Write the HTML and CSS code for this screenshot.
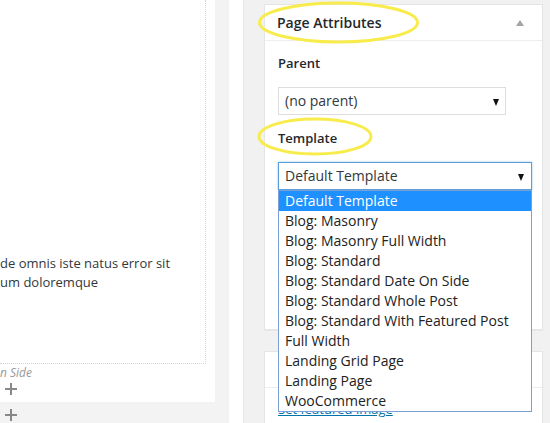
FILE: index.html
```html
<!DOCTYPE html>
<html>
<head>
<meta charset="utf-8">
<link rel="stylesheet" href="styles.css">
</head>
<body>
<div class="page">
  <div class="editor">
    <div class="editor-main">
      <div class="canvas">
        <p class="lorem">de omnis iste natus error sit<br>um doloremque</p>
      </div>
      <div class="caption">n Side</div>
      <div class="plus first"></div>
    </div>
    <div class="editor-foot">
      <div class="plus"></div>
    </div>
  </div>
  <div class="gutter-grey"></div>
  <div class="gutter-white"></div>
  <div class="sidebar">
    <div class="postbox">
      <div class="hndle">
        <h2>Page Attributes</h2>
        <span class="toggle"></span>
      </div>
      <div class="inside">
        <p class="label">Parent</p>
        <div class="select parent">(no parent)<span class="arrow"></span></div>
        <p class="label">Template</p>
        <div class="select-wrap">
          <div class="select focus">Default Template<span class="arrow"></span></div>
          <ul class="dropdown">
            <li class="selected">Default Template</li>
            <li>Blog: Masonry</li>
            <li>Blog: Masonry Full Width</li>
            <li>Blog: Standard</li>
            <li>Blog: Standard Date On Side</li>
            <li>Blog: Standard Whole Post</li>
            <li>Blog: Standard With Featured Post</li>
            <li>Full Width</li>
            <li>Landing Grid Page</li>
            <li>Landing Page</li>
            <li>WooCommerce</li>
          </ul>
        </div>
      </div>
    </div>
    <div class="postbox second">
      <div class="hndle"></div>
      <div class="inside">
        <a class="link" href="#">Set featured image</a>
      </div>
    </div>
    <svg class="marks" width="550" height="423" viewBox="0 0 550 423">
      <ellipse cx="338.5" cy="22.5" rx="79" ry="19.5" fill="none" stroke="#f8ec4c" stroke-width="3"/>
      <ellipse cx="315" cy="136.5" rx="56" ry="17.5" fill="none" stroke="#f8ec4c" stroke-width="3"/>
    </svg>
  </div>
</div>
</body>
</html>
```

FILE: styles.css
```css
* { box-sizing: border-box; }
html, body { margin: 0; padding: 0; }
body {
  width: 550px;
  height: 423px;
  overflow: hidden;
  font-family: "Open Sans", "Noto Sans", sans-serif;
  color: #32373c;
  background: #f1f1f1;
}
.page {
  display: flex;
  height: 423px;
  overflow: hidden;
}
.editor {
  width: 215px;
  display: flex;
  flex-direction: column;
}
.editor-main {
  background: #fff;
  height: 402px;
}
.canvas {
  width: 206px;
  height: 364px;
  border-right: 1px dotted #d4d4d4;
  border-bottom: 1px dotted #d4d4d4;
  padding-top: 254px;
}
.lorem {
  margin: 0;
  font-size: 13px;
  line-height: 19px;
  color: #32373c;
}
.caption {
  font-size: 12px;
  font-style: italic;
  color: #999;
  line-height: 14px;
  margin-top: 2px;
}
.plus {
  position: relative;
  width: 12px;
  height: 12px;
  margin-left: 5px;
}
.plus::before, .plus::after {
  content: "";
  position: absolute;
  background: #888;
}
.plus::before { left: 0; top: 5px; width: 12px; height: 2px; }
.plus::after { left: 5px; top: 0; width: 2px; height: 12px; }
.plus.first { margin-top: 3px; }
.editor-foot {
  flex: 1;
  background: #f3f3f3;
  padding-top: 7px;
}
.gutter-grey { width: 14px; background: #f3f3f3; }
.gutter-white { width: 14px; background: #fff; }
.sidebar {
  flex: 1;
  background: #f1f1f1;
  border-left: 1px solid #e8e8e8;
  padding: 4px 0 0 20px;
}
.postbox {
  width: 279px;
  background: #fff;
  border: 1px solid #e5e5e5;
  box-shadow: 0 1px 1px rgba(0,0,0,0.04);
}
.hndle {
  height: 36px;
  border-bottom: 1px solid #eee;
  display: flex;
  align-items: center;
  justify-content: space-between;
  padding: 0 12px;
}
.hndle h2 {
  margin: 0;
  font-size: 14px;
  font-weight: 600;
  color: #23282d;
  line-height: 1;
}
.toggle {
  width: 0;
  height: 0;
  border-left: 4px solid transparent;
  border-right: 4px solid transparent;
  border-bottom: 6px solid #a0a5aa;
  margin-right: 6px;
}
.inside {
  padding: 0 12px 0 13px;
  height: 288px;
}
.label {
  margin: 0;
  font-size: 13px;
  font-weight: 600;
  color: #23282d;
  line-height: 18px;
}
.inside > .label:first-child { padding-top: 13px; }
.select {
  height: 28px;
  border: 1px solid #ddd;
  font-size: 14px;
  line-height: 26px;
  padding-left: 6px;
  color: #32373c;
  position: relative;
}
.select.parent {
  width: 228px;
  margin: 15px 0 14px;
}
.select.focus {
  width: 254px;
  border-color: #5b9dd9;
  box-shadow: 0 0 2px rgba(30,140,190,0.5);
}
.arrow {
  position: absolute;
  top: 11px;
  width: 0;
  height: 0;
  border-left: 3.5px solid transparent;
  border-right: 3.5px solid transparent;
  border-top: 7px solid #111;
}
.parent .arrow { right: 6px; }
.focus .arrow { right: 7px; }
.select-wrap {
  position: relative;
  margin-top: 15px;
}
.dropdown {
  position: absolute;
  top: 28px;
  left: 0;
  width: 254px;
  margin: 0;
  padding: 0;
  list-style: none;
  background: #fff;
  border: 1px solid #7a9fd6;
  z-index: 5;
}
.dropdown li {
  height: 20px;
  line-height: 20px;
  font-size: 14px;
  padding-left: 6px;
  color: #222;
  white-space: nowrap;
}
.dropdown li.selected {
  background: #1e90ff;
  color: #fff;
}
.second {
  margin-top: 21px;
}
.second .inside {
  padding-top: 9px;
  padding-left: 13px;
  height: 36px;
}
.link {
  font-size: 13px;
  color: #0073aa;
  text-decoration: underline;
}
.marks {
  position: absolute;
  left: 0;
  top: 0;
  z-index: 10;
  pointer-events: none;
}
```
